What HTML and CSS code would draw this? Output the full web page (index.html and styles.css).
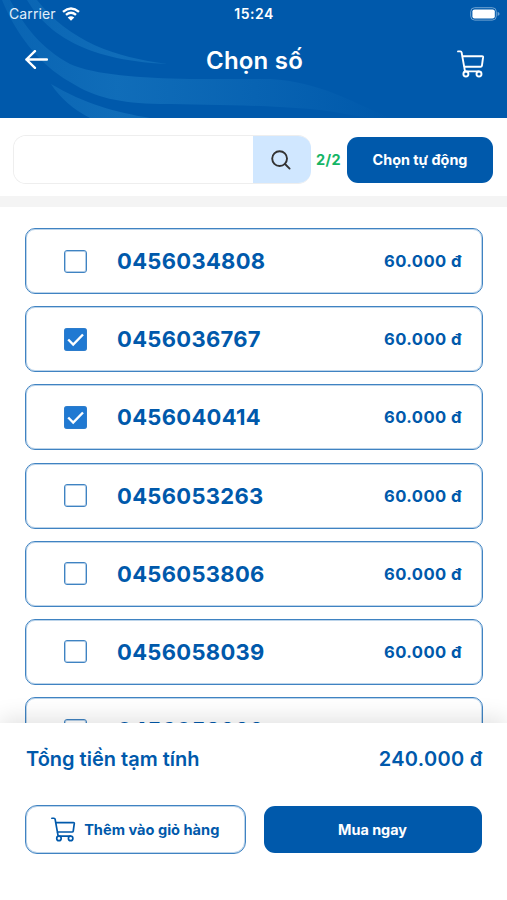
FILE: index.html
```html
<!DOCTYPE html>
<html lang="vi">
<head>
<meta charset="utf-8">
<meta name="viewport" content="width=device-width, initial-scale=1">
<title>Chọn số</title>
<link rel="stylesheet" href="styles.css">
</head>
<body>
<svg class="symbols" aria-hidden="true">
  <symbol id="cart" viewBox="0 0 28 28">
    <path d="M1 1.4h2.3q1.1 0 1.3 1l3.4 19M5.2 6.2h19.9q1.1 0 1 1l-1.2 8.6q-.2 1-1.2 1H7M8.2 21.4h13.7"/>
    <circle cx="8.9" cy="24" r="2.5"/><circle cx="22" cy="24" r="2.5"/>
  </symbol>
</svg>
<div class="screen">
  <header class="header">
    <svg class="waves" viewBox="0 0 507 118" aria-hidden="true">
      <defs>
        <linearGradient id="fade" gradientUnits="userSpaceOnUse" x1="0" y1="0" x2="390" y2="0">
          <stop offset="0" stop-color="#1d7dc4" stop-opacity=".3"/>
          <stop offset=".3" stop-color="#1d7dc4" stop-opacity=".55"/>
          <stop offset=".6" stop-color="#1d7dc4" stop-opacity=".32"/>
          <stop offset="1" stop-color="#1d7dc4" stop-opacity="0"/>
        </linearGradient>
      </defs>
      <path fill="url(#fade)" d="M27 0C45 30 80 60 167 64C115 57 70 42 37 0Z"/>
      <path fill="url(#fade)" d="M2 0C15 32 38 64 70 82C95 98 120 103 160 104C220 105 300 105 345 114L370 118H390C350 101 320 82 270 79H190C140 78 95 75 70 64C42 49 24 26 10 0Z"/>
      <path fill="url(#fade)" d="M51 84C60 98 74 110 90 118H150C115 112 85 104 51 84Z"/>
    </svg>
    <div class="status">
      <div class="carrier">
        <span>Carrier</span>
        <svg class="wifi" viewBox="0 0 18 14" aria-hidden="true">
          <path class="arc" d="M1 4.8Q9-2 17 4.8M4 7.9Q9 3.7 14 7.9"/>
          <path class="dot" d="M5.7 10.4Q9 7.9 12.3 10.4L9 13.8Z"/>
        </svg>
      </div>
      <span class="time">15:24</span>
      <svg class="battery" viewBox="0 0 30 14" aria-hidden="true">
        <rect class="shell" x=".7" y=".7" width="25.6" height="12.4" rx="4"/>
        <rect class="level" x="2.4" y="2.4" width="22.4" height="9" rx="2.2"/>
        <path class="tip" d="M27.6 4.7q2 1.1 2 2.2t-2 2.2z"/>
      </svg>
    </div>
    <div class="nav">
      <svg class="back" viewBox="0 0 22 18" aria-label="Quay lại"><path d="M9.5 1L1.3 9l8.2 8M1.3 9H21"/></svg>
      <h1>Chọn số</h1>
      <svg class="cart"><use href="#cart"/></svg>
    </div>
  </header>

  <section class="tools">
    <div class="search">
      <input type="text" aria-label="Tìm số">
      <button class="find" aria-label="Tìm"><svg viewBox="0 0 20 20"><circle cx="8.6" cy="8.6" r="7.4"/><path d="M14 14l4.6 4.6"/></svg></button>
    </div>
    <span class="count">2/2</span>
    <button class="primary auto">Chọn tự động</button>
  </section>

  <main class="list">
    <label class="row"><span class="box"></span><span class="number">0456034808</span><span class="price">60.000 đ</span></label>
    <label class="row"><span class="box checked"><svg viewBox="0 0 23 23"><path d="M4.2 11.5l5 5L19 6.5"/></svg></span><span class="number">0456036767</span><span class="price">60.000 đ</span></label>
    <label class="row"><span class="box checked"><svg viewBox="0 0 23 23"><path d="M4.2 11.5l5 5L19 6.5"/></svg></span><span class="number">0456040414</span><span class="price">60.000 đ</span></label>
    <label class="row"><span class="box"></span><span class="number">0456053263</span><span class="price">60.000 đ</span></label>
    <label class="row"><span class="box"></span><span class="number">0456053806</span><span class="price">60.000 đ</span></label>
    <label class="row"><span class="box"></span><span class="number">0456058039</span><span class="price">60.000 đ</span></label>
    <label class="row"><span class="box"></span><span class="number">0456058999</span><span class="price">60.000 đ</span></label>
  </main>

  <footer class="summary">
    <div class="total"><span>Tổng tiền tạm tính</span><span class="amount">240.000 đ</span></div>
    <div class="actions">
      <button class="outline"><svg class="cart"><use href="#cart"/></svg><span>Thêm vào giỏ hàng</span></button>
      <button class="primary buy">Mua ngay</button>
    </div>
  </footer>
</div>
</body>
</html>
```
FILE: styles.css
```css
* { box-sizing: border-box; }
body { margin: 0; background: #fff; font-family: Inter, "Liberation Sans", sans-serif; color: #0059ab; }
button, input { font: inherit; border: 0; padding: 0; margin: 0; }
.symbols { position: absolute; width: 0; height: 0; }
.screen { width: 507px; height: 900px; display: flex; flex-direction: column; overflow: hidden; }

.header { position: relative; height: 118px; flex: none; background: #0059ab; color: #fff; }
.waves { position: absolute; inset: 0; width: 100%; height: 100%; }
.status { position: relative; height: 27px; padding: 0 7px 0 9px; display: grid; grid-template-columns: 1fr auto 1fr; align-items: center; font-size: 14px; }
.carrier { display: flex; align-items: center; gap: 6px; color: #e2effa; letter-spacing: .1px; }
.wifi { width: 18px; height: 14px; }
.wifi .arc { fill: none; stroke: #fff; stroke-width: 2.4; }
.wifi .dot { fill: #fff; }
.time { font-weight: 600; letter-spacing: .5px; margin-right: 1px; }
.battery { width: 30px; height: 14px; justify-self: end; }
.battery .shell { fill: none; stroke: #6fa3d2; stroke-width: 1; }
.battery .level { fill: #fff; }
.battery .tip { fill: #6fa3d2; }
.nav { position: relative; height: 65px; padding: 0 22px 0 25px; display: grid; grid-template-columns: 1fr auto 1fr; align-items: center; }
.back { width: 23px; height: 19px; fill: none; stroke: #fff; stroke-width: 2.3; stroke-linecap: round; stroke-linejoin: round; }
h1 { margin: 2px 1px 0 0; font-size: 24px; line-height: 30px; font-weight: 600; letter-spacing: .2px; }
.cart { width: 28px; height: 28px; fill: none; stroke: currentColor; stroke-width: 1.9; stroke-linecap: round; stroke-linejoin: round; }
.nav .cart { justify-self: end; margin-top: 9px; }

.tools { height: 89px; flex: none; padding: 17px 13px 0; display: flex; align-items: flex-start; border-bottom: 11px solid #f4f4f4; }
.search { width: 298px; height: 49px; display: flex; border: 1px solid #eee; border-right: 0; border-radius: 13px; overflow: hidden; }
.search input { flex: 1; min-width: 0; outline: 0; background: #fff; }
.find { width: 58px; margin: -1px 0; padding-right: 2px; background: #d0e7ff; display: grid; place-items: center; }
.find svg { width: 20px; height: 20px; fill: none; stroke: #333; stroke-width: 1.9; stroke-linecap: round; }
.count { width: 36px; padding-right: 1px; text-align: center; line-height: 49px; font-size: 14.5px; font-weight: 700; color: #15b565; letter-spacing: .3px; }
.primary { background: #0059ab; color: #fff; font-weight: 700; font-size: 14.4px; border-radius: 11px; }
.auto { width: 146px; height: 46px; margin-top: 1.5px; }

.list { flex: 1; min-height: 0; overflow: hidden; padding: 21px 24.5px 0 25px; display: flex; flex-direction: column; gap: 12.2px; }
.row { height: 66px; flex: none; display: flex; align-items: center; padding: 0 19.5px 0 38px; border: 1px solid #3f83c2; box-shadow: inset 0 0 0 1px rgba(63, 131, 194, .35); border-radius: 10px; }
.box { width: 23px; height: 23px; border: 1px solid #3f83c2; box-shadow: inset 0 0 0 1px rgba(63, 131, 194, .4); border-radius: 3px; }
.checked { background: #2079d2; border: 0; }
.checked svg { display: block; width: 23px; height: 23px; fill: none; stroke: #fff; stroke-width: 2.4; }
.number { margin-left: 30px; font-size: 22px; font-weight: 650; letter-spacing: .3px; }
.price { margin-left: auto; font-size: 16.6px; font-weight: 650; letter-spacing: .45px; }

.summary { position: relative; height: 177px; flex: none; padding: 21px 24.5px 0 26px; background: #fff; box-shadow: 0 -4px 22px rgba(0, 0, 0, .12); }
.total { height: 30px; display: flex; justify-content: space-between; align-items: center; font-size: 20px; font-weight: 600; }
.amount { letter-spacing: .3px; }
.actions { margin: 31px 0 0 -1px; display: flex; align-items: center; gap: 18px; }
.outline { width: 220.5px; height: 49px; background: #fff; color: #0059ab; border: 1px solid #3f83c2; box-shadow: inset 0 0 0 1px rgba(63, 131, 194, .35); border-radius: 12px; display: flex; align-items: center; justify-content: center; gap: 8px; font-size: 14.6px; font-weight: 700; }
.outline .cart { width: 25px; height: 25px; }
.buy { width: 218px; height: 47px; }
```
